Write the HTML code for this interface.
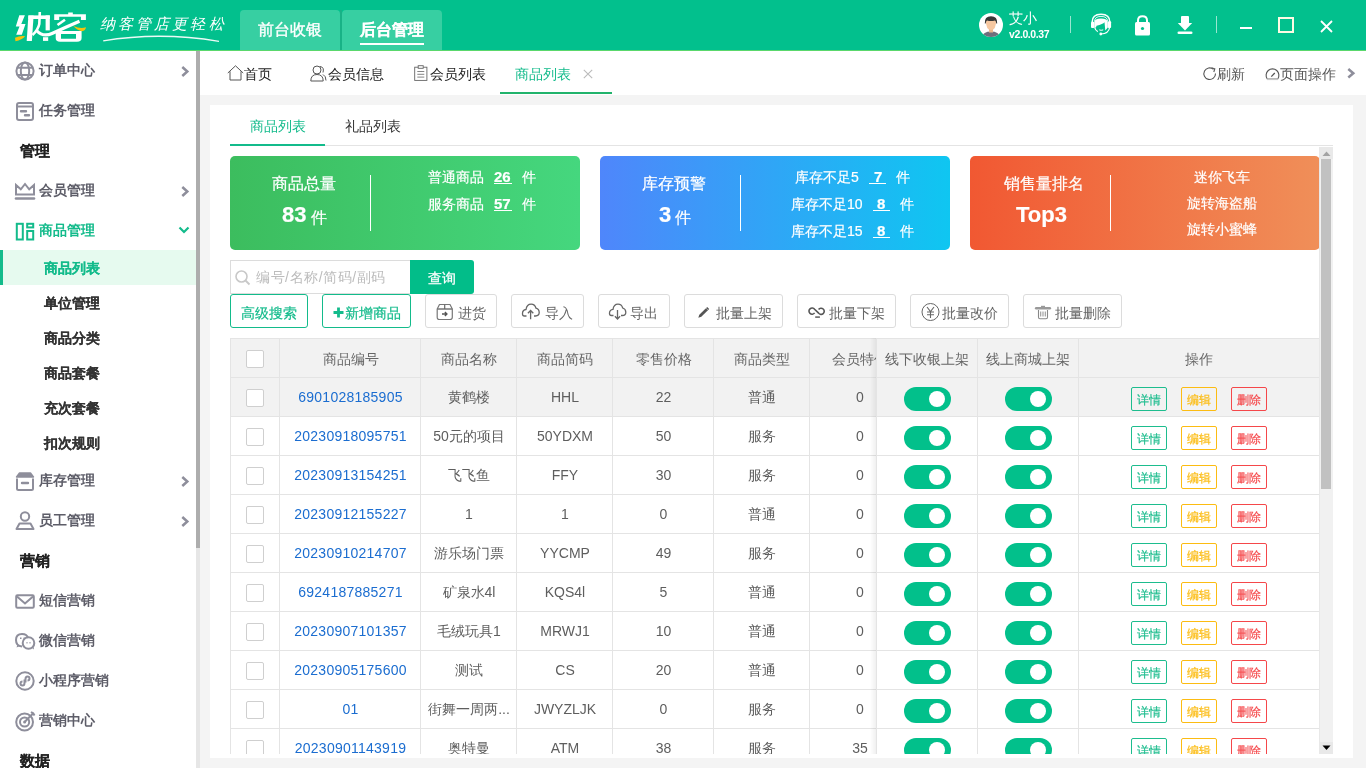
<!DOCTYPE html><html><head><meta charset="utf-8"><style>
*{margin:0;padding:0;box-sizing:border-box}
html,body{width:1366px;height:768px;overflow:hidden;background:#f4f4f4;font-family:"Liberation Sans",sans-serif}
.t{position:absolute;white-space:nowrap;line-height:1}
.a{position:absolute}
svg{position:absolute;overflow:visible}
</style></head><body><div style="position:absolute;left:0;top:0;width:1366px;height:768px;will-change:transform">

<div class="a" style="left:0;top:0;width:1366px;height:50px;background:#02c08d"></div>
<div class="a" style="left:0;top:50px;width:1366px;height:1px;background:#5ad86c"></div>
<svg style="left:0;top:0" width="240" height="50" viewBox="0 0 240 50">
<g fill="#fff">
<path d="M19.3 15.2 H24.9 L21.3 24 H25.5 L21.8 34.8 H16.2 L19.5 26.5 H15.8 Z"/>
<path d="M28.4 15.4 H33.6 L31.9 40.9 H26.7 Z"/>
<rect x="28.4" y="15.4" width="21.4" height="3.6"/>
<rect x="45.6" y="15.4" width="4.2" height="15"/>
<rect x="43" y="37.2" width="5.2" height="3.7"/>
<path d="M54.2 14.2 H85.9 V20.1 H80.9 V16.8 H59.2 V20.1 H54.2 Z"/>
<rect x="68.2" y="12.5" width="4.6" height="3"/>
<path d="M55.7 31 H81.6 V38 Q81.6 41.8 77 41.8 H60 Q55.7 41.8 55.7 38 Z M61 34 V38.8 H76 V34 Z" fill-rule="evenodd"/>
</g>
<path d="M39.8 12 L39.3 24 Q38 30 32.5 35" stroke="#fff" stroke-width="2.6" fill="none"/>
<path d="M57.5 25 L65 19.8" stroke="#fff" stroke-width="2.6" fill="none"/>
<path d="M36.5 30.5 Q43 37.5 52 33.5 Q66 27 79.5 21.2" stroke="#fff" stroke-width="3.2" fill="none"/>
<path d="M15 37.8 Q20 35.5 25.2 36.3 Q22 40 15.5 41.2 Z" fill="#f7c20b"/>
<path d="M73.5 26 Q80 29 86 27.3 Q85.5 30.8 82 31.2 Q77 30.5 73.5 26Z" fill="#f7c20b"/>
<text x="100" y="29" font-family="Liberation Serif,serif" font-size="15" font-style="italic" fill="#fff" letter-spacing="3.1">纳客管店更轻松</text>
<path d="M103.2 40.8 Q160 31.5 219 41.3" stroke="#fff" stroke-width="1.3" fill="none" opacity="0.92"/>
</svg>
<div class="a" style="left:240px;top:10px;width:100px;height:40px;background:#37cfa2;border-radius:4px 4px 0 0"></div>
<div class="a" style="left:342px;top:10px;width:100px;height:40px;background:#37cfa2;border-radius:4px 4px 0 0"></div>
<div class="a" style="left:340px;top:10px;width:2px;height:40px;background:#18b286"></div>
<div class="t" style="left:258px;top:22px;font-size:16px;color:#fff;-webkit-text-stroke:0.35px #fff">前台收银</div>
<div class="t" style="left:360px;top:22px;font-size:16px;color:#fff;font-weight:bold;-webkit-text-stroke:0.2px #fff">后台管理</div>
<div class="a" style="left:360px;top:43px;width:64px;height:2px;background:#fff"></div>
<svg style="left:979px;top:13px" width="24" height="24" viewBox="0 0 24 24">
<circle cx="12" cy="12" r="12" fill="#fff"/>
<clipPath id="av"><circle cx="12" cy="12" r="12"/></clipPath>
<g clip-path="url(#av)">
<path d="M2.5 25 Q3.5 18.5 12 18.5 Q20.5 18.5 21.5 25Z" fill="#6e6e7c"/>
<rect x="10" y="14.5" width="4" height="5" fill="#eab68c"/>
<path d="M6.8 7 Q6.8 17 12 17 Q17.2 17 17.2 7Z" fill="#f6c7a0"/>
<path d="M5.8 10.5 Q5.3 3.2 12 3.2 Q18.7 3.2 18.2 10.5 L17.3 10.5 Q17 8 16 7.6 Q12 8.6 8 7.6 Q7 8 6.7 10.5Z" fill="#383838"/>
</g></svg>
<div class="t" style="left:1009px;top:11px;font-size:14px;color:#fff">艾小</div>
<div class="t" style="left:1009px;top:29px;font-size:10.5px;color:#fff;font-weight:bold;letter-spacing:-0.4px">v2.0.0.37</div>
<div class="a" style="left:1070px;top:16px;width:1px;height:17px;background:rgba(255,255,255,.6)"></div>
<div class="a" style="left:1216px;top:16px;width:1px;height:17px;background:rgba(255,255,255,.6)"></div>
<svg style="left:1086px;top:10px" width="30" height="30" viewBox="0 0 30 30">
<path d="M6.2 12 Q6.2 4.2 15 4.2 Q23.8 4.2 23.8 12" stroke="#fff" stroke-width="1.5" fill="none"/>
<path d="M8.6 11.5 Q8.6 6.4 15 6.4 Q21.6 6.4 21.6 11.5" stroke="#fff" stroke-width="0.9" fill="none"/>
<rect x="5" y="11.7" width="3.4" height="6.3" rx="1" fill="#fff"/>
<rect x="21.8" y="11.3" width="3.3" height="6.7" rx="1" fill="#fff"/>
<path d="M8.3 12.5 Q8.3 8.4 15 8.4 Q21.8 8.4 21.8 12.5 V17.5 L19.3 20.5 L18.5 12.2 Q17 14 10.5 15.8 L10 17.5 L8.3 17.5Z" fill="#fff"/>
<path d="M8.6 17.3 Q9.6 20.6 11.8 21.6" stroke="#fff" stroke-width="1.2" fill="none"/>
<path d="M13.3 19.9 Q15 20.7 17.2 19.9" stroke="#fff" stroke-width="1" fill="none"/>
<path d="M23.6 17.5 Q22.8 23.6 15 24" stroke="#fff" stroke-width="1.2" fill="none"/>
<circle cx="14.8" cy="24" r="1.4" fill="#fff"/>
</svg>
<svg style="left:1134px;top:15px" width="17" height="21" viewBox="0 0 17 21">
<path d="M4 8 V5.5 Q4 1.3 8.5 1.3 Q13 1.3 13 5.5 V8" stroke="#fff" stroke-width="2" fill="none"/>
<rect x="1" y="7" width="15" height="13.5" rx="1.5" fill="#fff"/>
<circle cx="8.5" cy="13.5" r="1.6" fill="#02c08d"/>
</svg>
<svg style="left:1177px;top:15px" width="16" height="20" viewBox="0 0 16 20">
<rect x="4" y="1" width="8" height="8" rx="1" fill="#fff"/>
<path d="M0.8 8 H15.2 L8 15.5Z" fill="#fff"/>
<rect x="0.5" y="16.5" width="15" height="2.6" rx="1.3" fill="#fff"/>
</svg>
<div class="a" style="left:1240px;top:27px;width:12px;height:2px;background:#fff"></div>
<div class="a" style="left:1278px;top:17px;width:16px;height:16px;border:2px solid #fdfbe3"></div>
<svg style="left:1320px;top:20px" width="13" height="13" viewBox="0 0 13 13">
<path d="M1 1 L12 12 M12 1 L1 12" stroke="#fff" stroke-width="1.8"/></svg>
<div class="a" style="left:0;top:51px;width:196px;height:717px;background:#fff"></div>
<div class="a" style="left:196px;top:51px;width:4px;height:717px;background:#e6e6e6"></div>
<div class="a" style="left:196px;top:51px;width:4px;height:497px;background:#adadad"></div>
<div class="t" style="left:39px;top:63px;font-size:14px;font-weight:bold;color:#5d5d68">订单中心</div>
<svg style="left:15px;top:61px" width="20" height="20" viewBox="0 0 20 20"><circle cx="10" cy="10" r="8.6" stroke="#8e8e9b" stroke-width="2" fill="none"/><ellipse cx="10" cy="10" rx="4.2" ry="8.6" stroke="#8e8e9b" stroke-width="2" fill="none"/><path d="M2 6.8 H18 M2 14 H18" stroke="#8e8e9b" stroke-width="2" fill="none"/></svg>
<svg style="left:180px;top:66px" width="10" height="11" viewBox="0 0 10 11"><path d="M2.3 1 L7.3 5.5 L2.3 10" stroke="#8e8e9b" stroke-width="2.5" fill="none"/></svg>
<div class="t" style="left:39px;top:103px;font-size:14px;font-weight:bold;color:#5d5d68">任务管理</div>
<svg style="left:16px;top:102px" width="18" height="19" viewBox="0 0 18 19"><rect x="1" y="1" width="16" height="17" rx="2" stroke="#8e8e9b" stroke-width="2" fill="none"/><path d="M1 4.5 H17" stroke="#8e8e9b" stroke-width="2" fill="none"/><path d="M5 9.3 H10 M9 13.3 H13" stroke="#8e8e9b" stroke-width="2.4" stroke-linecap="round"/></svg>
<div class="t" style="left:20px;top:143px;font-size:15px;font-weight:bold;color:#222;-webkit-text-stroke:0.15px #222">管理</div>
<div class="t" style="left:39px;top:183px;font-size:14px;font-weight:bold;color:#5d5d68">会员管理</div>
<svg style="left:15px;top:183px" width="20" height="17" viewBox="0 0 20 17"><path d="M1 11.5 V2 L5.8 6.3 L10 1 L14.2 6.3 L19 2 V11.5 Z" stroke="#8e8e9b" stroke-width="2" fill="none" stroke-linejoin="miter"/><path d="M1 15.5 H19" stroke="#8e8e9b" stroke-width="2.6" stroke-linecap="round"/></svg>
<svg style="left:180px;top:186px" width="10" height="11" viewBox="0 0 10 11"><path d="M2.3 1 L7.3 5.5 L2.3 10" stroke="#8e8e9b" stroke-width="2.5" fill="none"/></svg>
<div class="t" style="left:39px;top:223px;font-size:14px;font-weight:bold;color:#13bb8b">商品管理</div>
<svg style="left:15px;top:222px" width="20" height="19" viewBox="0 0 20 19"><rect x="1.8" y="1.8" width="6" height="15.7" stroke="#13bb8b" stroke-width="2" fill="none"/><rect x="12.2" y="1.8" width="6" height="3.6" stroke="#13bb8b" stroke-width="2" fill="none"/><rect x="12.2" y="9" width="6" height="8.5" stroke="#13bb8b" stroke-width="2" fill="none"/></svg>
<svg style="left:178px;top:225px" width="12" height="10" viewBox="0 0 12 10"><path d="M1.5 2.5 L6 7 L10.5 2.5" stroke="#13bb8b" stroke-width="2.2" fill="none"/></svg>
<div class="a" style="left:0;top:250px;width:196px;height:35px;background:#e6faef"></div>
<div class="a" style="left:0;top:250px;width:3px;height:35px;background:#13bb8b"></div>
<div class="t" style="left:44px;top:261px;font-size:14px;font-weight:bold;color:#13bb8b;-webkit-text-stroke:0.1px #13bb8b">商品列表</div>
<div class="t" style="left:44px;top:296px;font-size:14px;font-weight:bold;color:#333;-webkit-text-stroke:0.1px #333">单位管理</div>
<div class="t" style="left:44px;top:331px;font-size:14px;font-weight:bold;color:#333;-webkit-text-stroke:0.1px #333">商品分类</div>
<div class="t" style="left:44px;top:366px;font-size:14px;font-weight:bold;color:#333;-webkit-text-stroke:0.1px #333">商品套餐</div>
<div class="t" style="left:44px;top:401px;font-size:14px;font-weight:bold;color:#333;-webkit-text-stroke:0.1px #333">充次套餐</div>
<div class="t" style="left:44px;top:436px;font-size:14px;font-weight:bold;color:#333;-webkit-text-stroke:0.1px #333">扣次规则</div>
<div class="t" style="left:39px;top:473px;font-size:14px;font-weight:bold;color:#5d5d68">库存管理</div>
<svg style="left:15px;top:471px" width="20" height="20" viewBox="0 0 20 20"><path d="M4.5 2 H15.5 L18.5 6 H1.5 Z" fill="#8e8e9b" stroke="#8e8e9b" stroke-width="1.4" stroke-linejoin="round"/><path d="M2 7.5 V17.5 Q2 19 3.5 19 H16.5 Q18 19 18 17.5 V7.5" stroke="#8e8e9b" stroke-width="2" fill="none"/><path d="M7 12 H13" stroke="#8e8e9b" stroke-width="2.4" stroke-linecap="round"/></svg>
<svg style="left:180px;top:476px" width="10" height="11" viewBox="0 0 10 11"><path d="M2.3 1 L7.3 5.5 L2.3 10" stroke="#8e8e9b" stroke-width="2.5" fill="none"/></svg>
<div class="t" style="left:39px;top:513px;font-size:14px;font-weight:bold;color:#5d5d68">员工管理</div>
<svg style="left:15px;top:511px" width="20" height="20" viewBox="0 0 20 20"><circle cx="10" cy="5.5" r="4.2" stroke="#8e8e9b" stroke-width="2" fill="none"/><path d="M1.5 18 L4.5 12.5 H15.5 L18.5 18 Z" stroke="#8e8e9b" stroke-width="2" fill="none" stroke-linejoin="round"/></svg>
<svg style="left:180px;top:516px" width="10" height="11" viewBox="0 0 10 11"><path d="M2.3 1 L7.3 5.5 L2.3 10" stroke="#8e8e9b" stroke-width="2.5" fill="none"/></svg>
<div class="t" style="left:20px;top:553px;font-size:15px;font-weight:bold;color:#222;-webkit-text-stroke:0.15px #222">营销</div>
<div class="t" style="left:39px;top:593px;font-size:14px;font-weight:bold;color:#5d5d68">短信营销</div>
<svg style="left:15px;top:594px" width="20" height="15" viewBox="0 0 20 15"><rect x="1.2" y="1.2" width="17.6" height="12.6" rx="1.2" stroke="#8e8e9b" stroke-width="2" fill="none"/><path d="M2 2.5 L10 9.5 L18 2.5" stroke="#8e8e9b" stroke-width="2" fill="none"/></svg>
<div class="t" style="left:39px;top:633px;font-size:14px;font-weight:bold;color:#5d5d68">微信营销</div>
<svg style="left:15px;top:632px" width="21" height="19" viewBox="0 0 21 19"><path d="M7 14.5 Q1 14 1 8 Q1 2 7 2 Q12 2 13 6" stroke="#8e8e9b" stroke-width="2" fill="none" stroke-width="1.8"/><path d="M2.5 12.5 L1.5 15.5 L5 14" fill="#8e8e9b"/><circle cx="13.5" cy="11" r="5.8" stroke="#8e8e9b" stroke-width="2" fill="none" stroke-width="1.8"/><path d="M17 16 L19 17.5 L18.5 14.5" fill="#8e8e9b"/><path d="M5 6.2 H6.5 M8.5 6.2 H10 M11.5 10.8 H12.5 M14.5 10.8 H15.5" stroke="#8e8e9b" stroke-width="1.4"/></svg>
<div class="t" style="left:39px;top:673px;font-size:14px;font-weight:bold;color:#5d5d68">小程序营销</div>
<svg style="left:15px;top:671px" width="20" height="20" viewBox="0 0 20 20"><circle cx="10" cy="10" r="8.7" stroke="#8e8e9b" stroke-width="2" fill="none" stroke-width="1.8"/><path d="M9.5 8.5 V12 Q9.5 14.5 7.5 14.5 Q5.5 14.5 5.5 12.5 Q5.5 10.5 7.5 10.5 M10.5 11.5 V8 Q10.5 5.5 12.5 5.5 Q14.5 5.5 14.5 7.5 Q14.5 9.5 12.5 9.5" stroke="#8e8e9b" stroke-width="2" fill="none" stroke-width="1.8"/></svg>
<div class="t" style="left:39px;top:713px;font-size:14px;font-weight:bold;color:#5d5d68">营销中心</div>
<svg style="left:15px;top:711px" width="21" height="21" viewBox="0 0 21 21"><circle cx="9.6" cy="11" r="8.4" stroke="#8e8e9b" stroke-width="2" fill="none" stroke-width="1.8"/><circle cx="9.6" cy="11" r="4.6" stroke="#8e8e9b" stroke-width="2" fill="none" stroke-width="1.8"/><circle cx="9.6" cy="11" r="1.5" fill="#8e8e9b"/><path d="M9.6 11 L18 2.5" stroke="#8e8e9b" stroke-width="2" fill="none" stroke-width="1.6"/><path d="M16 1 L18.2 2.3 L19.5 4.5" stroke="#8e8e9b" stroke-width="2" fill="none" stroke-width="1.6"/></svg>
<div class="t" style="left:20px;top:753px;font-size:15px;font-weight:bold;color:#222;-webkit-text-stroke:0.15px #222">数据</div>
<div class="a" style="left:200px;top:51px;width:1166px;height:44px;background:#fff"></div>
<svg style="left:227px;top:65px" width="17" height="16" viewBox="0 0 17 16"><path d="M0.8 8 L8.5 0.8 L16.2 8 M3 6.3 V15 H14 V6.3" stroke="#555" stroke-width="1" fill="none"/></svg>
<div class="t" style="left:244px;top:67px;font-size:14px;color:#222">首页</div>
<svg style="left:310px;top:65px" width="17" height="17" viewBox="0 0 17 17"><circle cx="7" cy="5" r="4" stroke="#555" stroke-width="1" fill="none"/><path d="M0.8 16 Q0.8 9.5 7 9.5 Q13.2 9.5 13.2 16 Z" stroke="#555" stroke-width="1" fill="none"/><path d="M10 1.5 Q14.5 2 13 7.5 M13 9.5 Q16 11 16 15.5" stroke="#555" stroke-width="1" fill="none"/></svg>
<div class="t" style="left:328px;top:67px;font-size:14px;color:#222">会员信息</div>
<svg style="left:414px;top:65px" width="14" height="16" viewBox="0 0 14 16"><rect x="0.7" y="2.2" width="12.2" height="13.2" stroke="#666" stroke-width="0.9" fill="none"/><rect x="4.2" y="0.7" width="5" height="2.6" stroke="#666" stroke-width="0.9" fill="#fff"/><path d="M3.3 6.5 H10.3 M3.3 9.3 H10.3 M3.3 12.1 H10.3" stroke="#777" stroke-width="0.9" fill="none"/></svg>
<div class="t" style="left:430px;top:67px;font-size:14px;color:#222">会员列表</div>
<div class="t" style="left:515px;top:67px;font-size:14px;color:#13bb8b">商品列表</div>
<svg style="left:583px;top:69px" width="10" height="10" viewBox="0 0 10 10"><path d="M0.8 0.8 L9.2 9.2 M9.2 0.8 L0.8 9.2" stroke="#bbb" stroke-width="1.1"/></svg>
<div class="a" style="left:500px;top:92px;width:112px;height:2px;background:#21b36c"></div>
<svg style="left:1203px;top:67px" width="14" height="14" viewBox="0 0 14 14"><path d="M12.5 6.5 A5.8 5.8 0 1 1 10.5 2.3" stroke="#555" stroke-width="1.1" fill="none"/><path d="M8.5 0.8 L11.8 1.8 L10.8 5" stroke="#555" stroke-width="1.1" fill="none"/></svg>
<div class="t" style="left:1217px;top:67px;font-size:14px;color:#555">刷新</div>
<svg style="left:1265px;top:67px" width="15" height="14" viewBox="0 0 15 14"><path d="M2.3 12 A6.4 6.4 0 1 1 12.7 12 Z" stroke="#555" stroke-width="1.1" fill="none"/><path d="M6.3 9.6 L9.8 6" stroke="#555" stroke-width="1.3"/><path d="M2 12.3 H13" stroke="#c8c8c8" stroke-width="1.6"/></svg>
<div class="t" style="left:1280px;top:67px;font-size:14px;color:#555">页面操作</div>
<svg style="left:1346px;top:68px" width="10" height="11" viewBox="0 0 10 11"><path d="M2.3 1 L7.3 5.2 L2.3 9.5" stroke="#8e8e9b" stroke-width="2.5" fill="none"/></svg>
<div class="a" style="left:210px;top:105px;width:1143px;height:653px;background:#fff"></div>
<div class="a" style="left:230px;top:145px;width:1103px;height:1px;background:#e4e4e4"></div>
<div class="a" style="left:230px;top:144px;width:95px;height:2px;background:#13bb8b"></div>
<div class="t" style="left:250px;top:119px;font-size:14px;color:#13bb8b">商品列表</div>
<div class="t" style="left:345px;top:119px;font-size:14px;color:#333">礼品列表</div>
<div class="a" style="left:230px;top:156px;width:350px;height:94px;border-radius:5px;background:linear-gradient(90deg,#3cbd5e,#45d77e)"></div>
<div class="a" style="left:370px;top:175px;width:1px;height:56px;background:#fff"></div>
<div class="a" style="left:600px;top:156px;width:350px;height:94px;border-radius:5px;background:linear-gradient(90deg,#4f86fb,#0fc6f1)"></div>
<div class="a" style="left:740px;top:175px;width:1px;height:56px;background:#fff"></div>
<div class="a" style="left:970px;top:156px;width:350px;height:94px;border-radius:5px;background:linear-gradient(90deg,#f15832,#f08f59)"></div>
<div class="a" style="left:1110px;top:175px;width:1px;height:56px;background:#fff"></div>
<div class="t" style="left:272px;top:176px;font-size:16px;color:#fff;-webkit-text-stroke:0.2px #fff">商品总量</div>
<div class="t" style="left:282px;top:204px;font-size:22px;font-weight:bold;color:#fff;-webkit-text-stroke:0.2px #fff">83</div>
<div class="t" style="left:311px;top:210px;font-size:16px;color:#fff;-webkit-text-stroke:0.2px #fff">件</div>
<div class="t" style="left:428px;top:170px;font-size:14px;color:#fff;-webkit-text-stroke:0.2px #fff">普通商品</div>
<div class="t" style="left:494px;top:169px;font-size:15px;font-weight:bold;color:#fff;-webkit-text-stroke:0.2px #fff">26</div>
<div class="a" style="left:494px;top:183px;width:18px;height:1px;background:#fff"></div>
<div class="t" style="left:522px;top:170px;font-size:14px;color:#fff;-webkit-text-stroke:0.2px #fff">件</div>
<div class="t" style="left:428px;top:197px;font-size:14px;color:#fff;-webkit-text-stroke:0.2px #fff">服务商品</div>
<div class="t" style="left:494px;top:196px;font-size:15px;font-weight:bold;color:#fff;-webkit-text-stroke:0.2px #fff">57</div>
<div class="a" style="left:494px;top:210px;width:18px;height:1px;background:#fff"></div>
<div class="t" style="left:522px;top:197px;font-size:14px;color:#fff;-webkit-text-stroke:0.2px #fff">件</div>
<div class="t" style="left:642px;top:176px;font-size:16px;color:#fff;-webkit-text-stroke:0.2px #fff">库存预警</div>
<div class="t" style="left:659px;top:204px;font-size:22px;font-weight:bold;color:#fff;-webkit-text-stroke:0.2px #fff">3</div>
<div class="t" style="left:675px;top:210px;font-size:16px;color:#fff;-webkit-text-stroke:0.2px #fff">件</div>
<div class="t" style="left:795px;top:170px;font-size:14px;color:#fff;-webkit-text-stroke:0.2px #fff">库存不足5</div>
<div class="t" style="left:874px;top:169px;font-size:15px;font-weight:bold;color:#fff;-webkit-text-stroke:0.2px #fff">7</div>
<div class="a" style="left:869px;top:183px;width:17px;height:1px;background:#fff"></div>
<div class="t" style="left:896px;top:170px;font-size:14px;color:#fff;-webkit-text-stroke:0.2px #fff">件</div>
<div class="t" style="left:791px;top:197px;font-size:14px;color:#fff;-webkit-text-stroke:0.2px #fff">库存不足10</div>
<div class="t" style="left:877px;top:196px;font-size:15px;font-weight:bold;color:#fff;-webkit-text-stroke:0.2px #fff">8</div>
<div class="a" style="left:873px;top:210px;width:17px;height:1px;background:#fff"></div>
<div class="t" style="left:900px;top:197px;font-size:14px;color:#fff;-webkit-text-stroke:0.2px #fff">件</div>
<div class="t" style="left:791px;top:224px;font-size:14px;color:#fff;-webkit-text-stroke:0.2px #fff">库存不足15</div>
<div class="t" style="left:877px;top:223px;font-size:15px;font-weight:bold;color:#fff;-webkit-text-stroke:0.2px #fff">8</div>
<div class="a" style="left:873px;top:237px;width:17px;height:1px;background:#fff"></div>
<div class="t" style="left:900px;top:224px;font-size:14px;color:#fff;-webkit-text-stroke:0.2px #fff">件</div>
<div class="t" style="left:1004px;top:176px;font-size:16px;color:#fff;-webkit-text-stroke:0.2px #fff">销售量排名</div>
<div class="t" style="left:1016px;top:204px;font-size:22px;font-weight:bold;color:#fff;-webkit-text-stroke:0.2px #fff">Top3</div>
<div class="t" style="left:1194px;top:170px;font-size:14px;color:#fff;-webkit-text-stroke:0.2px #fff">迷你飞车</div>
<div class="t" style="left:1187px;top:196px;font-size:14px;color:#fff;-webkit-text-stroke:0.2px #fff">旋转海盗船</div>
<div class="t" style="left:1187px;top:222px;font-size:14px;color:#fff;-webkit-text-stroke:0.2px #fff">旋转小蜜蜂</div>
<div class="a" style="left:230px;top:260px;width:181px;height:34px;border:1px solid #dcdcdc;border-right:none"></div>
<svg style="left:235px;top:270px" width="16" height="15" viewBox="0 0 16 15"><circle cx="6.5" cy="6.5" r="5.5" stroke="#c8c8c8" stroke-width="1.6" fill="none"/><path d="M10.5 10.5 L14.5 14.5" stroke="#c8c8c8" stroke-width="1.8"/></svg>
<div class="t" style="left:256px;top:270px;font-size:14px;color:#bcbcbc;letter-spacing:0.55px">编号/名称/简码/副码</div>
<div class="a" style="left:410px;top:260px;width:64px;height:34px;background:#02bd89;border-radius:0 3px 3px 0"></div>
<div class="t" style="left:428px;top:271px;font-size:14px;color:#fff;-webkit-text-stroke:0.25px #fff">查询</div>
<div class="a" style="left:230px;top:294px;width:78px;height:34px;border:1px solid #13bb8b;border-radius:3px"></div>
<div class="t" style="left:241px;top:306px;font-size:14px;color:#13bb8b;-webkit-text-stroke:0.2px #13bb8b">高级搜索</div>
<div class="a" style="left:322px;top:294px;width:89px;height:34px;border:1px solid #13bb8b;border-radius:3px"></div>
<div class="t" style="left:344.5px;top:306px;font-size:14px;color:#13bb8b;-webkit-text-stroke:0.2px #13bb8b">新增商品</div>
<svg style="left:333px;top:307px" width="11" height="11" viewBox="0 0 11 11"><path d="M5.5 0.5 V10.5 M0.5 5.5 H10.5" stroke="#13bb8b" stroke-width="2.8"/></svg>
<div class="a" style="left:425px;top:294px;width:72px;height:34px;border:1px solid #dcdcdc;border-radius:3px"></div>
<div class="t" style="left:458px;top:306px;font-size:14px;color:#666">进货</div>
<svg style="left:436px;top:303px" width="18" height="18" viewBox="0 0 18 18"><path d="M3.5 1.5 H14 L16.3 6 V14.3 Q16.3 16.5 14 16.5 H3.5 Q1.2 16.5 1.2 14.3 V6 Z" stroke="#777" stroke-width="1.2" fill="none" stroke-linejoin="round"/><path d="M1.2 6 H16.3" stroke="#777" stroke-width="1.5"/><path d="M8.7 1.5 V6" stroke="#666" stroke-width="1.2"/><path d="M6 11 H10.8 M8.9 9 L10.9 11 L8.9 13" stroke="#555" stroke-width="1.4" fill="none"/></svg>
<div class="a" style="left:511px;top:294px;width:73px;height:34px;border:1px solid #dcdcdc;border-radius:3px"></div>
<div class="t" style="left:545px;top:306px;font-size:14px;color:#666">导入</div>
<svg style="left:521px;top:303px" width="19" height="17" viewBox="0 0 19 17"><path d="M5.5 13 H3.3 Q1.5 13 1.5 11 V10.5 Q1.5 7 5 6.5 Q5.8 1.2 10.2 1.2 Q13.8 1.2 15 5.2 Q18.2 6.2 18.2 9.6 Q18.2 13 14.5 13 H13" stroke="#666" stroke-width="1.3" fill="none"/><path d="M9.6 16.2 V7.5 M6.9 10.3 L9.6 7.5 L12.3 10.3" stroke="#666" stroke-width="1.3" fill="none"/></svg>
<div class="a" style="left:598px;top:294px;width:72px;height:34px;border:1px solid #dcdcdc;border-radius:3px"></div>
<div class="t" style="left:630px;top:306px;font-size:14px;color:#666">导出</div>
<svg style="left:608px;top:303px" width="19" height="17" viewBox="0 0 19 17"><path d="M5.5 12.5 H3.3 Q1.5 12.5 1.5 10.5 V10 Q1.5 6.8 5 6.3 Q5.8 1.2 10 1.2 Q13.6 1.2 14.7 5 Q17.8 6 17.8 9.2 Q17.8 12.5 14.3 12.5 H13" stroke="#666" stroke-width="1.3" fill="none"/><path d="M9.5 7 V16 M6.9 13.3 L9.5 16 L12.1 13.3" stroke="#666" stroke-width="1.3" fill="none"/></svg>
<div class="a" style="left:684px;top:294px;width:99px;height:34px;border:1px solid #dcdcdc;border-radius:3px"></div>
<div class="t" style="left:716px;top:306px;font-size:14px;color:#666">批量上架</div>
<svg style="left:697px;top:305px" width="14" height="14" viewBox="0 0 14 14"><path d="M1.3 12.7 L2.3 9.8 L10.2 1.9 L12.2 3.9 L4.3 11.8 Z" fill="#555"/><path d="M9 3.1 L11 5.1" stroke="#fff" stroke-width="0.5"/></svg>
<div class="a" style="left:797px;top:294px;width:99px;height:34px;border:1px solid #dcdcdc;border-radius:3px"></div>
<div class="t" style="left:829px;top:306px;font-size:14px;color:#666">批量下架</div>
<svg style="left:808px;top:306px" width="18" height="13" viewBox="0 0 18 13"><path d="M6.6 6.9 A3.1 3.1 0 1 1 6.6 3.3 L10.6 7.1 A3.1 3.1 0 1 0 10.6 3.5" stroke="#555" stroke-width="1.6" fill="none"/><path d="M7.2 11.1 H11.9" stroke="#666" stroke-width="1.6"/></svg>
<div class="a" style="left:910px;top:294px;width:99px;height:34px;border:1px solid #dcdcdc;border-radius:3px"></div>
<div class="t" style="left:942px;top:306px;font-size:14px;color:#666">批量改价</div>
<svg style="left:921px;top:302px" width="19" height="20" viewBox="0 0 19 20"><circle cx="9.5" cy="10" r="8.5" stroke="#666" stroke-width="1" fill="none"/><path d="M6 5 L9.5 9.5 L13 5 M9.5 9.5 V16 M6 10 H13 M6 12.8 H13" stroke="#666" stroke-width="1.1" fill="none"/></svg>
<div class="a" style="left:1023px;top:294px;width:99px;height:34px;border:1px solid #dcdcdc;border-radius:3px"></div>
<div class="t" style="left:1055px;top:306px;font-size:14px;color:#666">批量删除</div>
<svg style="left:1035px;top:305px" width="16" height="15" viewBox="0 0 16 15"><path d="M1.2 3.3 H14.8" stroke="#999" stroke-width="2.6" stroke-linecap="round"/><path d="M6 1.5 H10" stroke="#999" stroke-width="1.4"/><path d="M3.5 5 V12.2 Q3.5 13.7 5 13.7 H11 Q12.5 13.7 12.5 12.2 V5" stroke="#888" stroke-width="1.1" fill="none"/><path d="M5.7 6.5 V11.5 M8 6.5 V11.5 M10.3 6.5 V11.5" stroke="#999" stroke-width="1.1"/></svg>
<div class="a" style="left:230px;top:147px;width:1090px;height:607px;overflow:hidden">
<div class="a" style="left:0;top:191px;width:1090px;height:40px;background:#f2f2f2"></div>
<div class="a" style="left:0;top:231px;width:1090px;height:38px;background:#f2f2f2"></div>
<div class="a" style="left:0;top:191px;width:1090px;height:1px;background:#e4e4e4"></div>
<div class="a" style="left:0;top:230px;width:1090px;height:1px;background:#e4e4e4"></div>
<div class="a" style="left:0;top:269px;width:1090px;height:1px;background:#e4e4e4"></div>
<div class="a" style="left:0;top:308px;width:1090px;height:1px;background:#e4e4e4"></div>
<div class="a" style="left:0;top:347px;width:1090px;height:1px;background:#e4e4e4"></div>
<div class="a" style="left:0;top:386px;width:1090px;height:1px;background:#e4e4e4"></div>
<div class="a" style="left:0;top:425px;width:1090px;height:1px;background:#e4e4e4"></div>
<div class="a" style="left:0;top:464px;width:1090px;height:1px;background:#e4e4e4"></div>
<div class="a" style="left:0;top:503px;width:1090px;height:1px;background:#e4e4e4"></div>
<div class="a" style="left:0;top:542px;width:1090px;height:1px;background:#e4e4e4"></div>
<div class="a" style="left:0;top:581px;width:1090px;height:1px;background:#e4e4e4"></div>
<div class="a" style="left:0;top:620px;width:1090px;height:1px;background:#e4e4e4"></div>
<div class="a" style="left:0px;top:191px;width:1px;height:500px;background:#e4e4e4"></div>
<div class="a" style="left:49px;top:191px;width:1px;height:500px;background:#e4e4e4"></div>
<div class="a" style="left:190px;top:191px;width:1px;height:500px;background:#e4e4e4"></div>
<div class="a" style="left:286px;top:191px;width:1px;height:500px;background:#e4e4e4"></div>
<div class="a" style="left:382px;top:191px;width:1px;height:500px;background:#e4e4e4"></div>
<div class="a" style="left:483px;top:191px;width:1px;height:500px;background:#e4e4e4"></div>
<div class="a" style="left:579px;top:191px;width:1px;height:500px;background:#e4e4e4"></div>
<div class="a" style="left:16px;top:203px;width:18px;height:18px;border:1px solid #cfcfcf;border-radius:2px;background:#fff"></div>
<div class="a" style="left:16px;top:242px;width:18px;height:18px;border:1px solid #cfcfcf;border-radius:2px;background:#fff"></div>
<div class="a" style="left:16px;top:281px;width:18px;height:18px;border:1px solid #cfcfcf;border-radius:2px;background:#fff"></div>
<div class="a" style="left:16px;top:320px;width:18px;height:18px;border:1px solid #cfcfcf;border-radius:2px;background:#fff"></div>
<div class="a" style="left:16px;top:359px;width:18px;height:18px;border:1px solid #cfcfcf;border-radius:2px;background:#fff"></div>
<div class="a" style="left:16px;top:398px;width:18px;height:18px;border:1px solid #cfcfcf;border-radius:2px;background:#fff"></div>
<div class="a" style="left:16px;top:437px;width:18px;height:18px;border:1px solid #cfcfcf;border-radius:2px;background:#fff"></div>
<div class="a" style="left:16px;top:476px;width:18px;height:18px;border:1px solid #cfcfcf;border-radius:2px;background:#fff"></div>
<div class="a" style="left:16px;top:515px;width:18px;height:18px;border:1px solid #cfcfcf;border-radius:2px;background:#fff"></div>
<div class="a" style="left:16px;top:554px;width:18px;height:18px;border:1px solid #cfcfcf;border-radius:2px;background:#fff"></div>
<div class="a" style="left:16px;top:593px;width:18px;height:18px;border:1px solid #cfcfcf;border-radius:2px;background:#fff"></div>
<div class="t" style="left:50px;top:205px;width:141px;text-align:center;font-size:14px;color:#666;letter-spacing:0px">商品编号</div>
<div class="t" style="left:191px;top:205px;width:96px;text-align:center;font-size:14px;color:#666;letter-spacing:0px">商品名称</div>
<div class="t" style="left:287px;top:205px;width:96px;text-align:center;font-size:14px;color:#666;letter-spacing:0px">商品简码</div>
<div class="t" style="left:383px;top:205px;width:101px;text-align:center;font-size:14px;color:#666;letter-spacing:0px">零售价格</div>
<div class="t" style="left:484px;top:205px;width:96px;text-align:center;font-size:14px;color:#666;letter-spacing:0px">商品类型</div>
<div class="t" style="left:580px;top:205px;width:100px;text-align:center;font-size:14px;color:#666;letter-spacing:0px">会员特价</div>
<div class="t" style="left:50px;top:243px;width:141px;text-align:center;font-size:14px;color:#1b6dd0;letter-spacing:0.25px">6901028185905</div>
<div class="t" style="left:191px;top:243px;width:96px;text-align:center;font-size:14px;color:#5e5e5e;letter-spacing:0px">黄鹤楼</div>
<div class="t" style="left:287px;top:243px;width:96px;text-align:center;font-size:14px;color:#5e5e5e;letter-spacing:0px">HHL</div>
<div class="t" style="left:383px;top:243px;width:101px;text-align:center;font-size:14px;color:#5e5e5e;letter-spacing:0px">22</div>
<div class="t" style="left:484px;top:243px;width:96px;text-align:center;font-size:14px;color:#5e5e5e;letter-spacing:0px">普通</div>
<div class="t" style="left:580px;top:243px;width:100px;text-align:center;font-size:14px;color:#5e5e5e;letter-spacing:0px">0</div>
<div class="t" style="left:50px;top:282px;width:141px;text-align:center;font-size:14px;color:#1b6dd0;letter-spacing:0.25px">20230918095751</div>
<div class="t" style="left:191px;top:282px;width:96px;text-align:center;font-size:14px;color:#5e5e5e;letter-spacing:0px">50元的项目</div>
<div class="t" style="left:287px;top:282px;width:96px;text-align:center;font-size:14px;color:#5e5e5e;letter-spacing:0px">50YDXM</div>
<div class="t" style="left:383px;top:282px;width:101px;text-align:center;font-size:14px;color:#5e5e5e;letter-spacing:0px">50</div>
<div class="t" style="left:484px;top:282px;width:96px;text-align:center;font-size:14px;color:#5e5e5e;letter-spacing:0px">服务</div>
<div class="t" style="left:580px;top:282px;width:100px;text-align:center;font-size:14px;color:#5e5e5e;letter-spacing:0px">0</div>
<div class="t" style="left:50px;top:321px;width:141px;text-align:center;font-size:14px;color:#1b6dd0;letter-spacing:0.25px">20230913154251</div>
<div class="t" style="left:191px;top:321px;width:96px;text-align:center;font-size:14px;color:#5e5e5e;letter-spacing:0px">飞飞鱼</div>
<div class="t" style="left:287px;top:321px;width:96px;text-align:center;font-size:14px;color:#5e5e5e;letter-spacing:0px">FFY</div>
<div class="t" style="left:383px;top:321px;width:101px;text-align:center;font-size:14px;color:#5e5e5e;letter-spacing:0px">30</div>
<div class="t" style="left:484px;top:321px;width:96px;text-align:center;font-size:14px;color:#5e5e5e;letter-spacing:0px">服务</div>
<div class="t" style="left:580px;top:321px;width:100px;text-align:center;font-size:14px;color:#5e5e5e;letter-spacing:0px">0</div>
<div class="t" style="left:50px;top:360px;width:141px;text-align:center;font-size:14px;color:#1b6dd0;letter-spacing:0.25px">20230912155227</div>
<div class="t" style="left:191px;top:360px;width:96px;text-align:center;font-size:14px;color:#5e5e5e;letter-spacing:0px">1</div>
<div class="t" style="left:287px;top:360px;width:96px;text-align:center;font-size:14px;color:#5e5e5e;letter-spacing:0px">1</div>
<div class="t" style="left:383px;top:360px;width:101px;text-align:center;font-size:14px;color:#5e5e5e;letter-spacing:0px">0</div>
<div class="t" style="left:484px;top:360px;width:96px;text-align:center;font-size:14px;color:#5e5e5e;letter-spacing:0px">普通</div>
<div class="t" style="left:580px;top:360px;width:100px;text-align:center;font-size:14px;color:#5e5e5e;letter-spacing:0px">0</div>
<div class="t" style="left:50px;top:399px;width:141px;text-align:center;font-size:14px;color:#1b6dd0;letter-spacing:0.25px">20230910214707</div>
<div class="t" style="left:191px;top:399px;width:96px;text-align:center;font-size:14px;color:#5e5e5e;letter-spacing:0px">游乐场门票</div>
<div class="t" style="left:287px;top:399px;width:96px;text-align:center;font-size:14px;color:#5e5e5e;letter-spacing:0px">YYCMP</div>
<div class="t" style="left:383px;top:399px;width:101px;text-align:center;font-size:14px;color:#5e5e5e;letter-spacing:0px">49</div>
<div class="t" style="left:484px;top:399px;width:96px;text-align:center;font-size:14px;color:#5e5e5e;letter-spacing:0px">服务</div>
<div class="t" style="left:580px;top:399px;width:100px;text-align:center;font-size:14px;color:#5e5e5e;letter-spacing:0px">0</div>
<div class="t" style="left:50px;top:438px;width:141px;text-align:center;font-size:14px;color:#1b6dd0;letter-spacing:0.25px">6924187885271</div>
<div class="t" style="left:191px;top:438px;width:96px;text-align:center;font-size:14px;color:#5e5e5e;letter-spacing:0px">矿泉水4l</div>
<div class="t" style="left:287px;top:438px;width:96px;text-align:center;font-size:14px;color:#5e5e5e;letter-spacing:0px">KQS4l</div>
<div class="t" style="left:383px;top:438px;width:101px;text-align:center;font-size:14px;color:#5e5e5e;letter-spacing:0px">5</div>
<div class="t" style="left:484px;top:438px;width:96px;text-align:center;font-size:14px;color:#5e5e5e;letter-spacing:0px">普通</div>
<div class="t" style="left:580px;top:438px;width:100px;text-align:center;font-size:14px;color:#5e5e5e;letter-spacing:0px">0</div>
<div class="t" style="left:50px;top:477px;width:141px;text-align:center;font-size:14px;color:#1b6dd0;letter-spacing:0.25px">20230907101357</div>
<div class="t" style="left:191px;top:477px;width:96px;text-align:center;font-size:14px;color:#5e5e5e;letter-spacing:0px">毛绒玩具1</div>
<div class="t" style="left:287px;top:477px;width:96px;text-align:center;font-size:14px;color:#5e5e5e;letter-spacing:0px">MRWJ1</div>
<div class="t" style="left:383px;top:477px;width:101px;text-align:center;font-size:14px;color:#5e5e5e;letter-spacing:0px">10</div>
<div class="t" style="left:484px;top:477px;width:96px;text-align:center;font-size:14px;color:#5e5e5e;letter-spacing:0px">普通</div>
<div class="t" style="left:580px;top:477px;width:100px;text-align:center;font-size:14px;color:#5e5e5e;letter-spacing:0px">0</div>
<div class="t" style="left:50px;top:516px;width:141px;text-align:center;font-size:14px;color:#1b6dd0;letter-spacing:0.25px">20230905175600</div>
<div class="t" style="left:191px;top:516px;width:96px;text-align:center;font-size:14px;color:#5e5e5e;letter-spacing:0px">测试</div>
<div class="t" style="left:287px;top:516px;width:96px;text-align:center;font-size:14px;color:#5e5e5e;letter-spacing:0px">CS</div>
<div class="t" style="left:383px;top:516px;width:101px;text-align:center;font-size:14px;color:#5e5e5e;letter-spacing:0px">20</div>
<div class="t" style="left:484px;top:516px;width:96px;text-align:center;font-size:14px;color:#5e5e5e;letter-spacing:0px">普通</div>
<div class="t" style="left:580px;top:516px;width:100px;text-align:center;font-size:14px;color:#5e5e5e;letter-spacing:0px">0</div>
<div class="t" style="left:50px;top:555px;width:141px;text-align:center;font-size:14px;color:#1b6dd0;letter-spacing:0.25px">01</div>
<div class="t" style="left:191px;top:555px;width:96px;text-align:center;font-size:14px;color:#5e5e5e;letter-spacing:0px">街舞一周两...</div>
<div class="t" style="left:287px;top:555px;width:96px;text-align:center;font-size:14px;color:#5e5e5e;letter-spacing:0px">JWYZLJK</div>
<div class="t" style="left:383px;top:555px;width:101px;text-align:center;font-size:14px;color:#5e5e5e;letter-spacing:0px">0</div>
<div class="t" style="left:484px;top:555px;width:96px;text-align:center;font-size:14px;color:#5e5e5e;letter-spacing:0px">服务</div>
<div class="t" style="left:580px;top:555px;width:100px;text-align:center;font-size:14px;color:#5e5e5e;letter-spacing:0px">0</div>
<div class="t" style="left:50px;top:594px;width:141px;text-align:center;font-size:14px;color:#1b6dd0;letter-spacing:0.25px">20230901143919</div>
<div class="t" style="left:191px;top:594px;width:96px;text-align:center;font-size:14px;color:#5e5e5e;letter-spacing:0px">奥特曼</div>
<div class="t" style="left:287px;top:594px;width:96px;text-align:center;font-size:14px;color:#5e5e5e;letter-spacing:0px">ATM</div>
<div class="t" style="left:383px;top:594px;width:101px;text-align:center;font-size:14px;color:#5e5e5e;letter-spacing:0px">38</div>
<div class="t" style="left:484px;top:594px;width:96px;text-align:center;font-size:14px;color:#5e5e5e;letter-spacing:0px">服务</div>
<div class="t" style="left:580px;top:594px;width:100px;text-align:center;font-size:14px;color:#5e5e5e;letter-spacing:0px">35</div>
<div class="a" style="left:640px;top:191px;width:6px;height:500px;background:linear-gradient(90deg,rgba(0,0,0,0),rgba(0,0,0,0.06))"></div>
<div class="a" style="left:646px;top:191px;width:444px;height:500px;background:#fff">
<div class="a" style="left:0;top:0;width:444px;height:40px;background:#f2f2f2"></div>
<div class="a" style="left:0;top:40px;width:444px;height:38px;background:#f2f2f2"></div>
<div class="a" style="left:0;top:0;width:444px;height:1px;background:#e4e4e4"></div>
<div class="a" style="left:0;top:39px;width:444px;height:1px;background:#e4e4e4"></div>
<div class="a" style="left:0;top:78px;width:444px;height:1px;background:#e4e4e4"></div>
<div class="a" style="left:0;top:117px;width:444px;height:1px;background:#e4e4e4"></div>
<div class="a" style="left:0;top:156px;width:444px;height:1px;background:#e4e4e4"></div>
<div class="a" style="left:0;top:195px;width:444px;height:1px;background:#e4e4e4"></div>
<div class="a" style="left:0;top:234px;width:444px;height:1px;background:#e4e4e4"></div>
<div class="a" style="left:0;top:273px;width:444px;height:1px;background:#e4e4e4"></div>
<div class="a" style="left:0;top:312px;width:444px;height:1px;background:#e4e4e4"></div>
<div class="a" style="left:0;top:351px;width:444px;height:1px;background:#e4e4e4"></div>
<div class="a" style="left:0;top:390px;width:444px;height:1px;background:#e4e4e4"></div>
<div class="a" style="left:0;top:429px;width:444px;height:1px;background:#e4e4e4"></div>
<div class="a" style="left:0px;top:0;width:1px;height:500px;background:#e4e4e4"></div>
<div class="a" style="left:101px;top:0;width:1px;height:500px;background:#e4e4e4"></div>
<div class="a" style="left:202px;top:0;width:1px;height:500px;background:#e4e4e4"></div>
<div class="a" style="left:443px;top:0;width:1px;height:500px;background:#e4e4e4"></div>
<div class="t" style="left:1px;top:14px;width:100px;text-align:center;font-size:14px;color:#666">线下收银上架</div>
<div class="t" style="left:102px;top:14px;width:100px;text-align:center;font-size:14px;color:#666">线上商城上架</div>
<div class="t" style="left:203px;top:14px;width:240px;text-align:center;font-size:14px;color:#666">操作</div>
<div class="a" style="left:28px;top:49px;width:47px;height:24px;border-radius:12px;background:#02c08b"></div>
<div class="a" style="left:53px;top:53px;width:16px;height:16px;border-radius:8px;background:#fff"></div>
<div class="a" style="left:129px;top:49px;width:47px;height:24px;border-radius:12px;background:#02c08b"></div>
<div class="a" style="left:154px;top:53px;width:16px;height:16px;border-radius:8px;background:#fff"></div>
<div class="a" style="left:255px;top:49px;width:36px;height:24px;border:1px solid #1dbd8e;border-radius:2px"></div>
<div class="t" style="left:255px;top:56px;width:36px;text-align:center;font-size:12px;color:#1dbd8e;-webkit-text-stroke:0.2px #1dbd8e">详情</div>
<div class="a" style="left:305px;top:49px;width:36px;height:24px;border:1px solid #fcbc12;border-radius:2px"></div>
<div class="t" style="left:305px;top:56px;width:36px;text-align:center;font-size:12px;color:#fcbc12;-webkit-text-stroke:0.2px #fcbc12">编辑</div>
<div class="a" style="left:355px;top:49px;width:36px;height:24px;border:1px solid #f5474a;border-radius:2px"></div>
<div class="t" style="left:355px;top:56px;width:36px;text-align:center;font-size:12px;color:#f5474a;-webkit-text-stroke:0.2px #f5474a">删除</div>
<div class="a" style="left:28px;top:88px;width:47px;height:24px;border-radius:12px;background:#02c08b"></div>
<div class="a" style="left:53px;top:92px;width:16px;height:16px;border-radius:8px;background:#fff"></div>
<div class="a" style="left:129px;top:88px;width:47px;height:24px;border-radius:12px;background:#02c08b"></div>
<div class="a" style="left:154px;top:92px;width:16px;height:16px;border-radius:8px;background:#fff"></div>
<div class="a" style="left:255px;top:88px;width:36px;height:24px;border:1px solid #1dbd8e;border-radius:2px"></div>
<div class="t" style="left:255px;top:95px;width:36px;text-align:center;font-size:12px;color:#1dbd8e;-webkit-text-stroke:0.2px #1dbd8e">详情</div>
<div class="a" style="left:305px;top:88px;width:36px;height:24px;border:1px solid #fcbc12;border-radius:2px"></div>
<div class="t" style="left:305px;top:95px;width:36px;text-align:center;font-size:12px;color:#fcbc12;-webkit-text-stroke:0.2px #fcbc12">编辑</div>
<div class="a" style="left:355px;top:88px;width:36px;height:24px;border:1px solid #f5474a;border-radius:2px"></div>
<div class="t" style="left:355px;top:95px;width:36px;text-align:center;font-size:12px;color:#f5474a;-webkit-text-stroke:0.2px #f5474a">删除</div>
<div class="a" style="left:28px;top:127px;width:47px;height:24px;border-radius:12px;background:#02c08b"></div>
<div class="a" style="left:53px;top:131px;width:16px;height:16px;border-radius:8px;background:#fff"></div>
<div class="a" style="left:129px;top:127px;width:47px;height:24px;border-radius:12px;background:#02c08b"></div>
<div class="a" style="left:154px;top:131px;width:16px;height:16px;border-radius:8px;background:#fff"></div>
<div class="a" style="left:255px;top:127px;width:36px;height:24px;border:1px solid #1dbd8e;border-radius:2px"></div>
<div class="t" style="left:255px;top:134px;width:36px;text-align:center;font-size:12px;color:#1dbd8e;-webkit-text-stroke:0.2px #1dbd8e">详情</div>
<div class="a" style="left:305px;top:127px;width:36px;height:24px;border:1px solid #fcbc12;border-radius:2px"></div>
<div class="t" style="left:305px;top:134px;width:36px;text-align:center;font-size:12px;color:#fcbc12;-webkit-text-stroke:0.2px #fcbc12">编辑</div>
<div class="a" style="left:355px;top:127px;width:36px;height:24px;border:1px solid #f5474a;border-radius:2px"></div>
<div class="t" style="left:355px;top:134px;width:36px;text-align:center;font-size:12px;color:#f5474a;-webkit-text-stroke:0.2px #f5474a">删除</div>
<div class="a" style="left:28px;top:166px;width:47px;height:24px;border-radius:12px;background:#02c08b"></div>
<div class="a" style="left:53px;top:170px;width:16px;height:16px;border-radius:8px;background:#fff"></div>
<div class="a" style="left:129px;top:166px;width:47px;height:24px;border-radius:12px;background:#02c08b"></div>
<div class="a" style="left:154px;top:170px;width:16px;height:16px;border-radius:8px;background:#fff"></div>
<div class="a" style="left:255px;top:166px;width:36px;height:24px;border:1px solid #1dbd8e;border-radius:2px"></div>
<div class="t" style="left:255px;top:173px;width:36px;text-align:center;font-size:12px;color:#1dbd8e;-webkit-text-stroke:0.2px #1dbd8e">详情</div>
<div class="a" style="left:305px;top:166px;width:36px;height:24px;border:1px solid #fcbc12;border-radius:2px"></div>
<div class="t" style="left:305px;top:173px;width:36px;text-align:center;font-size:12px;color:#fcbc12;-webkit-text-stroke:0.2px #fcbc12">编辑</div>
<div class="a" style="left:355px;top:166px;width:36px;height:24px;border:1px solid #f5474a;border-radius:2px"></div>
<div class="t" style="left:355px;top:173px;width:36px;text-align:center;font-size:12px;color:#f5474a;-webkit-text-stroke:0.2px #f5474a">删除</div>
<div class="a" style="left:28px;top:205px;width:47px;height:24px;border-radius:12px;background:#02c08b"></div>
<div class="a" style="left:53px;top:209px;width:16px;height:16px;border-radius:8px;background:#fff"></div>
<div class="a" style="left:129px;top:205px;width:47px;height:24px;border-radius:12px;background:#02c08b"></div>
<div class="a" style="left:154px;top:209px;width:16px;height:16px;border-radius:8px;background:#fff"></div>
<div class="a" style="left:255px;top:205px;width:36px;height:24px;border:1px solid #1dbd8e;border-radius:2px"></div>
<div class="t" style="left:255px;top:212px;width:36px;text-align:center;font-size:12px;color:#1dbd8e;-webkit-text-stroke:0.2px #1dbd8e">详情</div>
<div class="a" style="left:305px;top:205px;width:36px;height:24px;border:1px solid #fcbc12;border-radius:2px"></div>
<div class="t" style="left:305px;top:212px;width:36px;text-align:center;font-size:12px;color:#fcbc12;-webkit-text-stroke:0.2px #fcbc12">编辑</div>
<div class="a" style="left:355px;top:205px;width:36px;height:24px;border:1px solid #f5474a;border-radius:2px"></div>
<div class="t" style="left:355px;top:212px;width:36px;text-align:center;font-size:12px;color:#f5474a;-webkit-text-stroke:0.2px #f5474a">删除</div>
<div class="a" style="left:28px;top:244px;width:47px;height:24px;border-radius:12px;background:#02c08b"></div>
<div class="a" style="left:53px;top:248px;width:16px;height:16px;border-radius:8px;background:#fff"></div>
<div class="a" style="left:129px;top:244px;width:47px;height:24px;border-radius:12px;background:#02c08b"></div>
<div class="a" style="left:154px;top:248px;width:16px;height:16px;border-radius:8px;background:#fff"></div>
<div class="a" style="left:255px;top:244px;width:36px;height:24px;border:1px solid #1dbd8e;border-radius:2px"></div>
<div class="t" style="left:255px;top:251px;width:36px;text-align:center;font-size:12px;color:#1dbd8e;-webkit-text-stroke:0.2px #1dbd8e">详情</div>
<div class="a" style="left:305px;top:244px;width:36px;height:24px;border:1px solid #fcbc12;border-radius:2px"></div>
<div class="t" style="left:305px;top:251px;width:36px;text-align:center;font-size:12px;color:#fcbc12;-webkit-text-stroke:0.2px #fcbc12">编辑</div>
<div class="a" style="left:355px;top:244px;width:36px;height:24px;border:1px solid #f5474a;border-radius:2px"></div>
<div class="t" style="left:355px;top:251px;width:36px;text-align:center;font-size:12px;color:#f5474a;-webkit-text-stroke:0.2px #f5474a">删除</div>
<div class="a" style="left:28px;top:283px;width:47px;height:24px;border-radius:12px;background:#02c08b"></div>
<div class="a" style="left:53px;top:287px;width:16px;height:16px;border-radius:8px;background:#fff"></div>
<div class="a" style="left:129px;top:283px;width:47px;height:24px;border-radius:12px;background:#02c08b"></div>
<div class="a" style="left:154px;top:287px;width:16px;height:16px;border-radius:8px;background:#fff"></div>
<div class="a" style="left:255px;top:283px;width:36px;height:24px;border:1px solid #1dbd8e;border-radius:2px"></div>
<div class="t" style="left:255px;top:290px;width:36px;text-align:center;font-size:12px;color:#1dbd8e;-webkit-text-stroke:0.2px #1dbd8e">详情</div>
<div class="a" style="left:305px;top:283px;width:36px;height:24px;border:1px solid #fcbc12;border-radius:2px"></div>
<div class="t" style="left:305px;top:290px;width:36px;text-align:center;font-size:12px;color:#fcbc12;-webkit-text-stroke:0.2px #fcbc12">编辑</div>
<div class="a" style="left:355px;top:283px;width:36px;height:24px;border:1px solid #f5474a;border-radius:2px"></div>
<div class="t" style="left:355px;top:290px;width:36px;text-align:center;font-size:12px;color:#f5474a;-webkit-text-stroke:0.2px #f5474a">删除</div>
<div class="a" style="left:28px;top:322px;width:47px;height:24px;border-radius:12px;background:#02c08b"></div>
<div class="a" style="left:53px;top:326px;width:16px;height:16px;border-radius:8px;background:#fff"></div>
<div class="a" style="left:129px;top:322px;width:47px;height:24px;border-radius:12px;background:#02c08b"></div>
<div class="a" style="left:154px;top:326px;width:16px;height:16px;border-radius:8px;background:#fff"></div>
<div class="a" style="left:255px;top:322px;width:36px;height:24px;border:1px solid #1dbd8e;border-radius:2px"></div>
<div class="t" style="left:255px;top:329px;width:36px;text-align:center;font-size:12px;color:#1dbd8e;-webkit-text-stroke:0.2px #1dbd8e">详情</div>
<div class="a" style="left:305px;top:322px;width:36px;height:24px;border:1px solid #fcbc12;border-radius:2px"></div>
<div class="t" style="left:305px;top:329px;width:36px;text-align:center;font-size:12px;color:#fcbc12;-webkit-text-stroke:0.2px #fcbc12">编辑</div>
<div class="a" style="left:355px;top:322px;width:36px;height:24px;border:1px solid #f5474a;border-radius:2px"></div>
<div class="t" style="left:355px;top:329px;width:36px;text-align:center;font-size:12px;color:#f5474a;-webkit-text-stroke:0.2px #f5474a">删除</div>
<div class="a" style="left:28px;top:361px;width:47px;height:24px;border-radius:12px;background:#02c08b"></div>
<div class="a" style="left:53px;top:365px;width:16px;height:16px;border-radius:8px;background:#fff"></div>
<div class="a" style="left:129px;top:361px;width:47px;height:24px;border-radius:12px;background:#02c08b"></div>
<div class="a" style="left:154px;top:365px;width:16px;height:16px;border-radius:8px;background:#fff"></div>
<div class="a" style="left:255px;top:361px;width:36px;height:24px;border:1px solid #1dbd8e;border-radius:2px"></div>
<div class="t" style="left:255px;top:368px;width:36px;text-align:center;font-size:12px;color:#1dbd8e;-webkit-text-stroke:0.2px #1dbd8e">详情</div>
<div class="a" style="left:305px;top:361px;width:36px;height:24px;border:1px solid #fcbc12;border-radius:2px"></div>
<div class="t" style="left:305px;top:368px;width:36px;text-align:center;font-size:12px;color:#fcbc12;-webkit-text-stroke:0.2px #fcbc12">编辑</div>
<div class="a" style="left:355px;top:361px;width:36px;height:24px;border:1px solid #f5474a;border-radius:2px"></div>
<div class="t" style="left:355px;top:368px;width:36px;text-align:center;font-size:12px;color:#f5474a;-webkit-text-stroke:0.2px #f5474a">删除</div>
<div class="a" style="left:28px;top:400px;width:47px;height:24px;border-radius:12px;background:#02c08b"></div>
<div class="a" style="left:53px;top:404px;width:16px;height:16px;border-radius:8px;background:#fff"></div>
<div class="a" style="left:129px;top:400px;width:47px;height:24px;border-radius:12px;background:#02c08b"></div>
<div class="a" style="left:154px;top:404px;width:16px;height:16px;border-radius:8px;background:#fff"></div>
<div class="a" style="left:255px;top:400px;width:36px;height:24px;border:1px solid #1dbd8e;border-radius:2px"></div>
<div class="t" style="left:255px;top:407px;width:36px;text-align:center;font-size:12px;color:#1dbd8e;-webkit-text-stroke:0.2px #1dbd8e">详情</div>
<div class="a" style="left:305px;top:400px;width:36px;height:24px;border:1px solid #fcbc12;border-radius:2px"></div>
<div class="t" style="left:305px;top:407px;width:36px;text-align:center;font-size:12px;color:#fcbc12;-webkit-text-stroke:0.2px #fcbc12">编辑</div>
<div class="a" style="left:355px;top:400px;width:36px;height:24px;border:1px solid #f5474a;border-radius:2px"></div>
<div class="t" style="left:355px;top:407px;width:36px;text-align:center;font-size:12px;color:#f5474a;-webkit-text-stroke:0.2px #f5474a">删除</div>
</div>
</div>
<div class="a" style="left:1319px;top:147px;width:1px;height:607px;background:#e8e8e8"></div>
<div class="a" style="left:1320px;top:147px;width:13px;height:607px;background:#f1f1f1"></div>
<div class="a" style="left:1321px;top:159px;width:10px;height:330px;background:#c1c1c1"></div>
<div class="a" style="left:1320px;top:147px;width:13px;height:12px;background:#e9e9e9"></div>
<div class="a" style="left:1320px;top:742px;width:13px;height:12px;background:#e9e9e9"></div>
<svg style="left:1322px;top:151px" width="9" height="6" viewBox="0 0 9 6"><path d="M0.5 5 L4.5 0.5 L8.5 5Z" fill="#a3a3a3"/></svg>
<svg style="left:1322px;top:745px" width="9" height="6" viewBox="0 0 9 6"><path d="M0.5 0.5 L4.5 5 L8.5 0.5Z" fill="#000"/></svg>
</div></body></html>
